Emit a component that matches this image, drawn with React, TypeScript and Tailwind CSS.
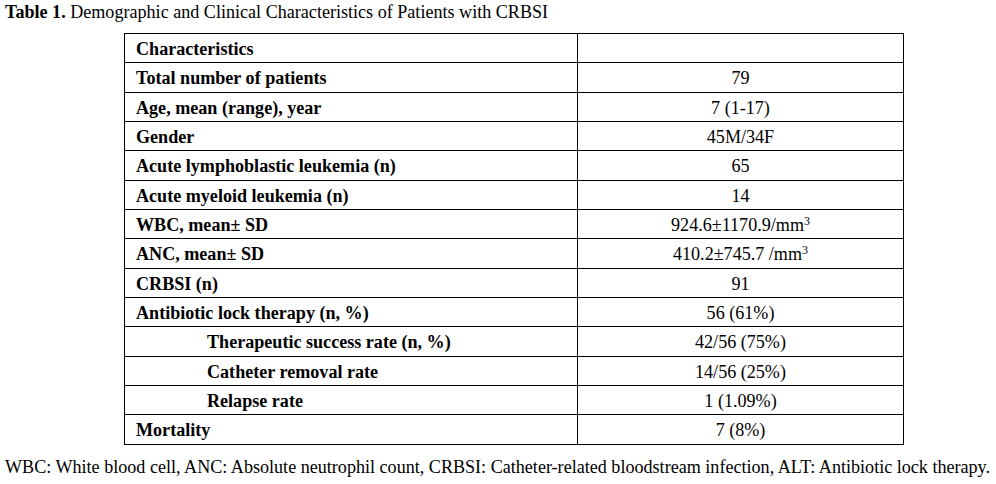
import React from 'react';

const rows: { label: string; value: React.ReactNode; indent?: boolean }[] = [
  { label: 'Characteristics', value: '' },
  { label: 'Total number of patients', value: '79' },
  { label: 'Age, mean (range), year', value: '7 (1-17)' },
  { label: 'Gender', value: '45M/34F' },
  { label: 'Acute lymphoblastic leukemia (n)', value: '65' },
  { label: 'Acute myeloid leukemia (n)', value: '14' },
  { label: 'WBC, mean± SD', value: <>924.6±1170.9/mm<sup className="text-[12px]">3</sup></> },
  { label: 'ANC, mean± SD', value: <>410.2±745.7 /mm<sup className="text-[12px]">3</sup></> },
  { label: 'CRBSI (n)', value: '91' },
  { label: 'Antibiotic lock therapy (n, %)', value: '56 (61%)' },
  { label: 'Therapeutic success rate (n, %)', value: '42/56 (75%)', indent: true },
  { label: 'Catheter removal rate', value: '14/56 (25%)', indent: true },
  { label: 'Relapse rate', value: '1 (1.09%)', indent: true },
  { label: 'Mortality', value: '7 (8%)' },
];

export default function App() {
  return (
    <div
      className="w-[996px] h-[484px] bg-white text-black text-[18.1px] leading-none"
      style={{ fontFamily: "'Liberation Serif', 'Times New Roman', serif" }}
    >
      <p className="pl-[5px] pt-[3px] h-[33px] whitespace-nowrap">
        <b>Table 1.</b> Demographic and Clinical Characteristics of Patients with CRBSI
      </p>
      <table className="ml-[124px] w-[780px] border-collapse border border-black">
        <tbody>
          {rows.map((r, i) => (
            <tr key={i} className={i % 3 === 1 ? 'h-[30px]' : 'h-[29px]'}>
              <td
                className={`w-[453px] border border-black font-bold pr-2 pt-[2px] ${r.indent ? 'pl-[82px]' : 'pl-[11px]'}`}
              >
                {r.label}
              </td>
              <td className="border border-black text-center pt-[2px]">{r.value}</td>
            </tr>
          ))}
        </tbody>
      </table>
      <p className="pl-[5px] pt-[13px] whitespace-nowrap">
        WBC: White blood cell, ANC: Absolute neutrophil count, CRBSI: Catheter-related bloodstream infection, ALT: Antibiotic lock therapy.
      </p>
    </div>
  );
}
